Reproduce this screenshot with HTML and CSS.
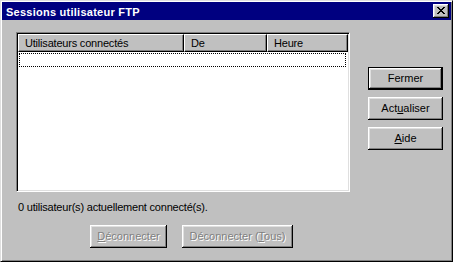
FILE: index.html
```html
<!DOCTYPE html>
<html lang="fr">
<head>
  <meta charset="UTF-8">
  <title>Sessions utilisateur FTP</title>
  <link rel="stylesheet" href="styles.css">
</head>
<body>
<div class="window">
  <div class="titlebar">
    <span class="title">Sessions utilisateur FTP</span>
    <button class="close-btn" type="button">
      <svg width="8" height="7" viewBox="0 0 8 7" shape-rendering="crispEdges">
        <path d="M0 0h2v1h-2zM6 0h2v1h-2zM1 1h2v1h-2zM5 1h2v1h-2zM2 2h4v1h-4zM3 3h2v1h-2zM2 4h4v1h-4zM1 5h2v1h-2zM5 5h2v1h-2zM0 6h2v1h-2zM6 6h2v1h-2z" fill="#000"/>
      </svg>
    </button>
  </div>
  <div class="content">
    <div class="main-row">
      <div class="listview">
        <div class="header">
          <div class="col col-user">Utilisateurs connectés</div>
          <div class="col col-from">De</div>
          <div class="col col-time">Heure</div>
        </div>
        <div class="list-body">
          <div class="focus-row"></div>
        </div>
      </div>
      <div class="side-buttons">
        <button class="btn default" type="button">Fermer</button>
        <button class="btn" type="button">Act<u>u</u>aliser</button>
        <button class="btn" type="button"><u>A</u>ide</button>
      </div>
    </div>
    <div class="status">0 utilisateur(s) actuellement connecté(s).</div>
    <div class="bottom-buttons">
      <button class="btn disabled btn-disc" type="button"><u>D</u>éconnecter</button>
      <button class="btn disabled btn-all" type="button">Déconnecter (<u>T</u>ous)</button>
    </div>
  </div>
</div>
</body>
</html>
```

FILE: styles.css
```css
*{margin: 0;padding: 0;box-sizing: border-box;}
body{background: #c0c0c0;font: 11px "Liberation Sans", Arial, sans-serif;color: #000;letter-spacing: -0.2px;}
.window{width: 453px;height: 262px;padding: 1px;background: #c0c0c0;border: 1px solid;border-color: #dfdfdf #000 #000 #dfdfdf;box-shadow: inset 1px 1px #fff, inset -1px -1px #808080;}

.titlebar{height: 18px;background: #000080;display: flex;align-items: center;justify-content: space-between;padding: 0 2px 0 4px;}
.title{color: #fff;font-weight: bold;font-size: 11px;letter-spacing: 0.25px;line-height: 18px;padding-top: 1px;}
.close-btn{width: 16px;height: 14px;border: 0;background: #c0c0c0;display: flex;align-items: center;justify-content: center;box-shadow: inset -1px -1px #000, inset 1px 1px #fff, inset -2px -2px #808080, inset 2px 2px #dfdfdf;padding: 0 1px 1px 0;}
.close-btn svg{display: block;}

.content{padding: 12px 0 0 14px;}
.main-row{display: flex;}
.listview{width: 334px;height: 160px;background: #fff;border: 1px solid;border-color: #808080 #fff #fff #808080;box-shadow: inset 1px 1px #000, inset -1px -1px #dfdfdf;padding: 1px;display: flex;flex-direction: column;}
.header{display: flex;height: 18px;background: #c0c0c0;}
.col{height: 18px;line-height: 16px;padding-left: 6px;border-top: 1px solid #fff;border-left: 1px solid #fff;box-shadow: inset -1px -1px #808080;border-right: 1px solid #000;border-bottom: 1px solid #000;white-space: nowrap;overflow: hidden;}
.col-user{width: 166px;}
.col-from{width: 83px;}
.col-time{flex: 1;}
.list-body{flex: 1;padding: 1px 2px 0 1px;}
.focus-row{height: 14px;border: 1px dotted #000;}

.side-buttons{display: flex;flex-direction: column;gap: 7px;margin-left: 18px;padding-top: 35px;}
.btn{font: inherit;color: #000;width: 75px;height: 23px;border: 0;background: #c0c0c0;box-shadow: inset -1px -1px #000, inset 1px 1px #fff, inset -2px -2px #808080, inset 2px 2px #dfdfdf;text-align: center;line-height: 21px;}
.btn.default{border: 1px solid #000;line-height: 19px;}
.btn u{text-decoration: underline;text-underline-offset: 1px;}

.status{margin-top: 9px;line-height: 13px;padding-left: 2px;}
.bottom-buttons{display: flex;gap: 15px;margin: 11px 0 0 74px;}
.btn.disabled{color: #808080;text-shadow: 1px 1px 0 #fff;}
.btn-disc{width: 77px;}
.btn-all{width: 111px;}
```
